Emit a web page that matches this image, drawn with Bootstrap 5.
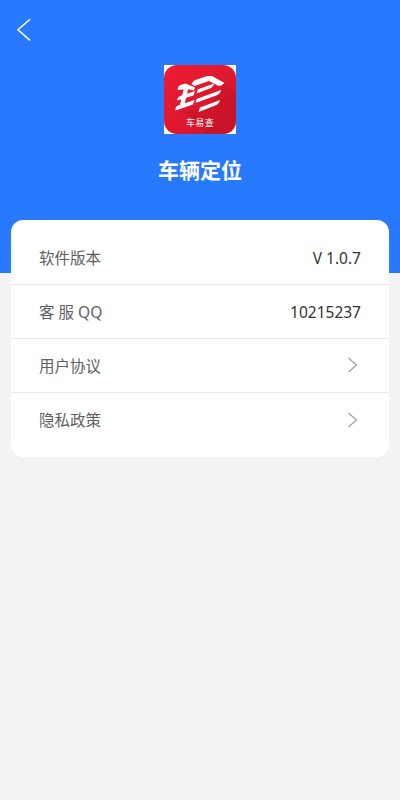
<!DOCTYPE html>
<html lang="zh-CN">
<head>
    <meta charset="UTF-8">
    <meta name="viewport" content="width=device-width, initial-scale=1.0">
    <title>车辆定位</title>
    <link rel="stylesheet" href="https://cdn.jsdelivr.net/npm/bootstrap@5.3.0/dist/css/bootstrap.min.css">
    <script src="https://cdn.jsdelivr.net/npm/bootstrap@5.3.0/dist/js/bootstrap.bundle.min.js"></script>
    <style>
        body {
            font-family: "Noto Sans", "Noto Sans CJK SC", sans-serif;
            background-color: #f3f3f3;
            min-height: 100vh;
        }

        .page-header {
            height: 273px;
            background-color: #2979ff;
        }

        .top-bar {
            height: 65px;
            padding: 18px 0 0 16px;
        }

        .app-title {
            font-size: 21px;
            line-height: 30px;
            margin-top: 21px;
        }

        .info-card {
            margin: -53px 11px 0;
            padding: 10px 0;
            border-radius: 12px;
            background-color: #fff;
        }

        .info-card .list-group-item {
            height: 54px;
            padding: 2px 28px 0;
            border-color: #e9e9e9;
            font-size: 15.5px;
            color: #606060;
            background-color: transparent;
        }

        .info-card .item-value {
            color: #333;
        }

        .info-card .list-group-item:first-child {
            height: 55px;
            padding-top: 3px;
        }

        .info-card .item-arrow {
            margin-top: -3px;
        }
    </style>
</head>
<body>
    <!-- Header -->
    <header class="page-header text-white text-center">
        <div class="top-bar d-flex align-items-start">
            <a href="#" class="d-flex text-white" aria-label="返回">
                <svg width="16" height="24" viewBox="0 0 16 24" fill="none" stroke="currentColor" stroke-width="1.5">
                    <path d="M14 1.200 2 11.800l12 10.600"/>
                </svg>
            </a>
        </div>
        <svg class="d-block mx-auto" width="72" height="69" viewBox="0 0 72 69">
            <defs>
                <linearGradient id="logoRed" x1="0" y1="0" x2="1" y2="1">
                    <stop offset="0" stop-color="#ee1c33"/>
                    <stop offset="1" stop-color="#d0142a"/>
                </linearGradient>
            </defs>
            <rect width="72" height="69" fill="#fff"/>
            <rect width="72" height="69" rx="13" fill="url(#logoRed)"/>
            <path fill="#b01024" opacity=".3" d="M60 18 72 29v27q0 13-13 13H42L18 46l22-2 14-14z"/>
            <g fill="#fff">
                <!-- roof -->
                <path d="M27.500 19 30 15.500 43 11h5L60.500 18 57 20.800h-3L45 16 30.500 21z"/>
                <!-- left bars and stem -->
                <path d="M13.500 25q.3-4 3-5l5-1.500L31 22.500l-1 3-7-1.500z"/>
                <path d="M13 35.500q.3-3.500 3-4.500L31 26l-1.500 4.500z"/>
                <path d="M11.500 45.500q-.5-4 2.500-5L30.500 35 29 39.500z"/>
                <path d="M20.500 20h4.500l-5 22h-4.500z"/>
                <!-- right bars -->
                <path d="M33.500 24.500 50 18.500q-.5 3-3 4.500L32.500 28.500z"/>
                <path d="M32.500 34 57 25q-.5 3.500-3.500 5L31.500 38z"/>
                <path d="M36 42.500 56 35q-.5 3.500-3.500 5L34.500 47z"/>
            </g>
            <text x="36" y="60.500" text-anchor="middle" font-size="9" letter-spacing=".3" fill="#fff">车易查</text>
        </svg>
        <h1 class="app-title fw-bold mb-0">车辆定位</h1>
    </header>

    <!-- App info -->
    <main class="info-card">
        <div class="list-group list-group-flush">
            <div class="list-group-item d-flex justify-content-between align-items-center">
                <span>软件版本</span>
                <span class="item-value">V 1.0.7</span>
            </div>
            <div class="list-group-item d-flex justify-content-between align-items-center">
                <span>客 服 QQ</span>
                <span class="item-value">10215237</span>
            </div>
            <a href="#" class="list-group-item d-flex justify-content-between align-items-center">
                <span>用户协议</span>
                <svg class="item-arrow" width="14" height="16" viewBox="0 0 14 16" fill="none" stroke="#999" stroke-width="1.1">
                    <path d="M1.500 1 9.500 8l-8 7"/>
                </svg>
            </a>
            <a href="#" class="list-group-item d-flex justify-content-between align-items-center">
                <span>隐私政策</span>
                <svg class="item-arrow" width="14" height="16" viewBox="0 0 14 16" fill="none" stroke="#999" stroke-width="1.1">
                    <path d="M1.500 1 9.500 8l-8 7"/>
                </svg>
            </a>
        </div>
    </main>
</body>
</html>
